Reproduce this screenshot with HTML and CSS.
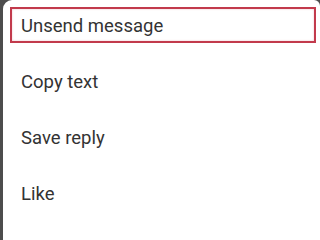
FILE: index.html
```html
<!DOCTYPE html>
<html>
<head>
<meta charset="utf-8">
<link rel="stylesheet" href="styles.css">
</head>
<body>
<div class="sheet">
  <ul class="menu">
    <li class="item item--highlight">Unsend message</li>
    <li class="item">Copy text</li>
    <li class="item">Save reply</li>
    <li class="item">Like</li>
  </ul>
</div>
</body>
</html>
```
FILE: styles.css
```css
html, body {
  margin: 0;
  padding: 0;
  height: 100%;
  overflow: hidden;
  background: #4d4d4d;
}
.sheet {
  margin-left: 3px;
  min-height: 100vh;
  background: #ffffff;
  border-radius: 9px 6px 0 0;
}
.menu {
  list-style: none;
  margin: 0;
  padding: 7px 4px 0 7px;
  display: flex;
  flex-direction: column;
  gap: 20px;
}
.item {
  height: 36px;
  box-sizing: border-box;
  display: flex;
  align-items: center;
  padding-left: 9px;
  padding-top: 1px;
  border: 2px solid transparent;
  font-family: Roboto, "Liberation Sans", sans-serif;
  font-size: 18.5px;
  color: #333333;
}
.item--highlight {
  border-color: #c23a4c;
  box-shadow: inset 0 0 2px rgba(194, 58, 76, 0.35);
}
```
